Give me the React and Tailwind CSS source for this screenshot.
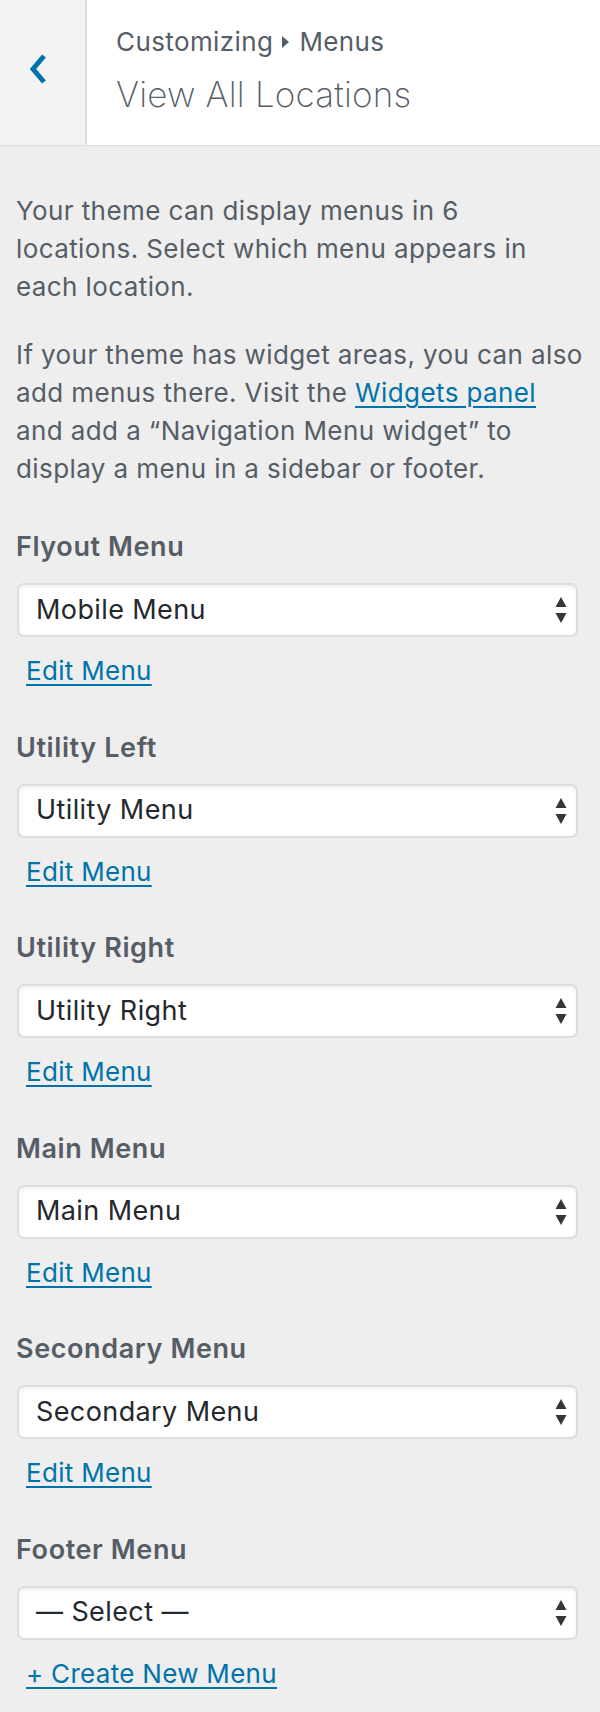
import React from "react";

const locations = [
  { label: "Flyout Menu", value: "Mobile Menu" },
  { label: "Utility Left", value: "Utility Menu" },
  { label: "Utility Right", value: "Utility Right" },
  { label: "Main Menu", value: "Main Menu" },
  { label: "Secondary Menu", value: "Secondary Menu" },
  { label: "Footer Menu", value: "— Select —", create: true },
];

function SelectArrows() {
  return (
    <svg width="12" height="26" viewBox="0 0 12 26" className="shrink-0">
      <polygon points="6,0 11.5,10 0.5,10" fill="#32373c" />
      <polygon points="0.5,16 11.5,16 6,26" fill="#32373c" />
    </svg>
  );
}

function LocationControl({ label, value, create }) {
  return (
    <div className="flex flex-col">
      <h4 className="text-[27px] leading-[32px] font-semibold tracking-[0.6px] text-[#555d66]">{label}</h4>
      {/* fake select, native arrows don't match */}
      <div className="mt-[20px] ml-[1px] w-[561px] h-[54px] flex items-center justify-between pl-[17px] pr-[9px] bg-white border-2 border-[#dddddd] rounded-[7px] shadow-[inset_0_2px_4px_rgba(0,0,0,0.07)]">
        <span className="text-[27px] tracking-[0.4px] text-[#23282d]">{value}</span>
        <SelectArrows />
      </div>
      <div className="mt-[18px] pl-[10px] h-[32px] leading-[32px] text-[26px]">
        <a href="#" className="tracking-[0.3px] text-[#0073aa] underline decoration-2 underline-offset-[4px]">
          {create ? "+ Create New Menu" : "Edit Menu"}
        </a>
      </div>
    </div>
  );
}

export default function App() {
  return (
    <div className="min-h-screen bg-[#eeeeee] font-['Inter',sans-serif]">
      {/* Header */}
      <div className="flex h-[146px] bg-white border-b border-[#dddddd]">
        <div className="w-[87px] shrink-0 bg-[#f3f3f3] border-r-2 border-[#dddddd] pl-[28px] pt-[54px]">
          <svg width="18" height="30" viewBox="0 0 18 30">
            <polyline points="16,2 5,15 16,28" fill="none" stroke="#0073aa" strokeWidth="5" />
          </svg>
        </div>
        <div className="pl-[29px] pt-[26px]">
          <div className="flex items-center text-[26px] leading-[32px] tracking-[0.4px] text-[#555d66]">
            <span>Customizing</span>
            <svg width="8" height="12" viewBox="0 0 8 12" className="mx-[9px]">
              <polygon points="0,0 7,6 0,12" fill="#555d66" />
            </svg>
            <span>Menus</span>
          </div>
          <h3 className="mt-[15px] text-[35px] leading-[42px] font-extralight tracking-[0.2px] text-[#555d66]">View All Locations</h3>
        </div>
      </div>

      {/* Body */}
      <div className="px-4 pt-[46px] pb-[20px]">
        <div className="text-[26px] leading-[38px] tracking-[0.4px] text-[#555d66] whitespace-nowrap">
          <p>
            Your theme can display menus in 6<br />
            locations. Select which menu appears in<br />
            each location.
          </p>
          <p className="mt-[30px]">
            If your theme has widget areas, you can also<br />
            add menus there. Visit the{" "}
            <a href="#" className="text-[#0073aa] underline decoration-2 underline-offset-[4px]">Widgets panel</a>
            <br />
            and add a “Navigation Menu widget” to<br />
            display a menu in a sidebar or footer.
          </p>
        </div>

        <div className="mt-[43px] flex flex-col gap-[44.5px]">
          {locations.map((loc) => (
            <LocationControl key={loc.label} {...loc} />
          ))}
        </div>
      </div>
    </div>
  );
}
